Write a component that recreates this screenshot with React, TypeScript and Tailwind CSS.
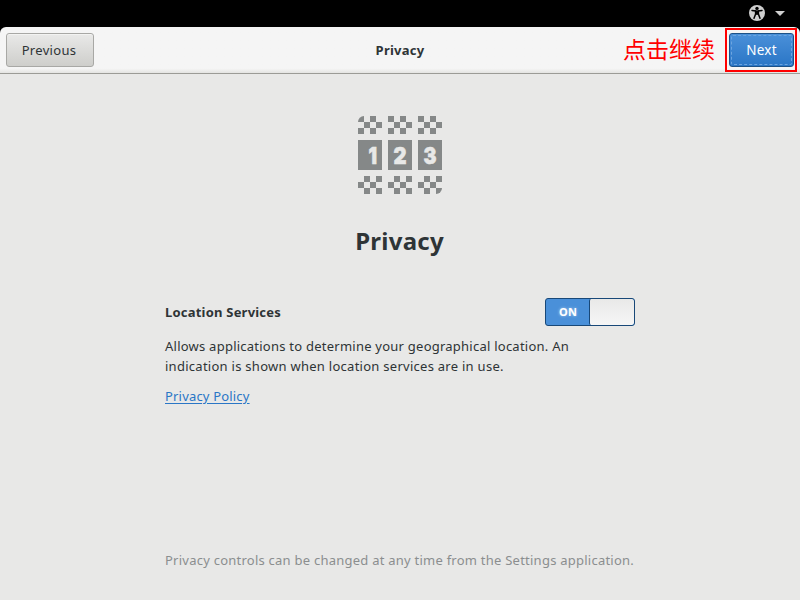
const SANS = "font-['Noto_Sans','Open_Sans',sans-serif]";

const TOP = [[0, 0], [2, 0], [1, 1], [3, 1], [0, 2], [2, 2]];
const BOTTOM = [[1, 0], [3, 0], [0, 1], [2, 1], [1, 2], [3, 2]];

function PrivacyIcon() {
  return (
    <svg width="84" height="78" viewBox="0 0 84 78" fill="#858888" shapeRendering="crispEdges">
      {[0, 30, 60].map((x, b) => (
        <g key={x}>
          {TOP.map(([c, r]) =>
            b === 0 && c === 0 && r === 0 ? (
              <path key="corner" d="M0 6A6 6 0 0 1 6 0V6Z" shapeRendering="auto" />
            ) : (
              <rect key={`t${c}${r}`} x={x + c * 6} y={r * 6} width="6" height="6" />
            ),
          )}
          <rect x={x} y="24" width="24" height="30" />
          {BOTTOM.map(([c, r]) =>
            b === 2 && c === 3 && r === 2 ? (
              <path key="corner" d="M78 72H84A6 6 0 0 1 78 78Z" shapeRendering="auto" />
            ) : (
              <rect key={`b${c}${r}`} x={x + c * 6} y={60 + r * 6} width="6" height="6" />
            ),
          )}
        </g>
      ))}
      <g fill="#e8e8e7" stroke="#e8e8e7" strokeWidth="0.6" letterSpacing="0" fontFamily="Inter, sans-serif" fontWeight="900" fontSize="23">
        <text x="10.5" y="47.5" textLength="8.5" lengthAdjust="spacingAndGlyphs">1</text>
        <text x="35.5" y="47.5" textLength="13" lengthAdjust="spacingAndGlyphs">2</text>
        <text x="65.5" y="47.5" textLength="13" lengthAdjust="spacingAndGlyphs">3</text>
      </g>
    </svg>
  );
}

function AccessibilityIcon() {
  return (
    <svg width="16" height="16" viewBox="0 0 16 16">
      <circle cx="8" cy="8" r="8" fill="#cfcfcf" />
      <circle cx="8" cy="3.4" r="1.7" fill="#000" />
      <path d="M3 5.4 6.6 6V9L5 13.2M13 5.4 9.4 6V9L11 13.2" fill="none" stroke="#000" strokeWidth="1.5" strokeLinecap="round" />
      <path d="M6 5.4H10V9.8H6Z" fill="#000" />
    </svg>
  );
}

export default function App() {
  return (
    <div className={`flex h-[600px] w-[800px] flex-col overflow-hidden bg-black text-[13px] tracking-[0.24px] text-[#2e3436] ${SANS}`}>
      <div className="flex h-[27px] shrink-0 items-start justify-end gap-[10px] pr-[15px] pt-[5px]">
        <AccessibilityIcon />
        <svg width="10" height="5" viewBox="0 0 10 5" className="mt-[6px]">
          <path d="M0 0H10L5 5Z" fill="#cfcfcf" />
        </svg>
      </div>
      <header className="grid h-[47px] shrink-0 grid-cols-[1fr_auto_1fr] rounded-t-[6px] border-b border-[#9b9b96] bg-linear-to-b from-[#f5f5f5] from-90% to-[#e4e4e2]">
        <div className="pl-[6px] pt-[6px]">
          <button className="h-[34px] w-[88px] rounded-[3px] border border-[#a8a8a5] bg-linear-to-b from-[#e9e9e8] to-[#cececb] pt-px pr-[2px] tracking-[0.32px] shadow-[inset_0_1px_#f3f3f2]">
            Previous
          </button>
        </div>
        <h1 className="pt-[13px] leading-5 font-bold tracking-[0.24px]">Privacy</h1>
        <div className="flex justify-end pr-[3px] pt-px">
          <span className="mr-[10px] mt-[4px] font-['Noto_Sans_CJK_SC',sans-serif] text-[23px] leading-[32px] tracking-normal text-[#f00]">点击继续</span>
          <div className="h-[44px] w-[72px] border-2 border-[#f00] pt-[3px] pl-[2px]">
            <button className="h-[34px] w-[65px] rounded-[3px] border border-[#1c5187] bg-linear-to-b from-[#4a90d9] to-[#2a76c6] p-px text-white">
              <span className="flex h-full items-center justify-center rounded-[2px] border border-dashed border-[#6ca4df] pt-px text-[13.5px]">Next</span>
            </button>
          </div>
        </div>
      </header>
      <main className="flex flex-1 flex-col items-center bg-[#e8e8e7] pt-[42px]">
        <PrivacyIcon />
        <h2 className="mt-[29px] pr-px text-[24px] leading-9 font-bold tracking-[0.25px]">Privacy</h2>
        <div className="mt-[39px] flex h-7 w-[470px] items-center justify-between">
          <h3 className="pt-[2px] font-bold tracking-[0.21px]">Location Services</h3>
          <div className="flex h-7 w-[90px] overflow-hidden rounded-[3px] border border-[#184878] bg-[#4a90d9]">
            <span className="flex flex-1 items-center justify-center pl-px text-[11px] font-bold text-white [text-shadow:0_0_3px_#ffffff90]">ON</span>
            <span className="w-[45px] rounded-[2px] border-l border-[#184878] bg-linear-to-b from-[#e9e9e8] to-[#f6f6f6]" />
          </div>
        </div>
        <div className="mt-[10px] w-[470px] leading-5">
          <p className="whitespace-nowrap">Allows applications to determine your geographical location. An</p>
          <p className="whitespace-nowrap tracking-[0.27px]">indication is shown when location services are in use.</p>
          <a className="mt-[10px] inline-block tracking-[0.18px] text-[#2a76c6] underline underline-offset-2">Privacy Policy</a>
        </div>
        <p className="mt-[144px] w-[470px] leading-5 whitespace-nowrap text-[#8b8e8f]">Privacy controls can be changed at any time from the Settings application.</p>
      </main>
    </div>
  );
}
